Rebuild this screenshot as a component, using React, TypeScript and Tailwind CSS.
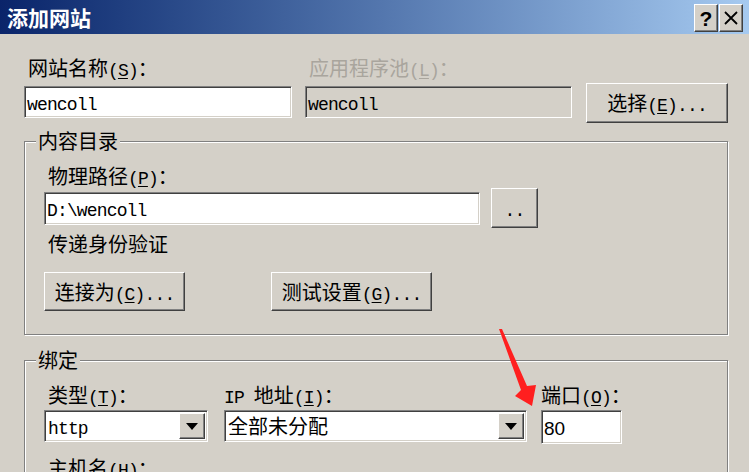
import React from 'react';

// split text into CJK / latin runs; latin runs get the half-width mono face, "&" marks the mnemonic letter
const Mix = ({ t }: { t: string }) => {
    const parts = t.split(/([\x20-\x7e]+)/).filter(Boolean);
    return (
        <>
            {parts.map((p, i) => {
                if (!/[\x20-\x7e]/.test(p[0])) return <span key={i}>{p}</span>;
                const k = p.indexOf('&');
                return (
                    <span key={i} className="font-['Liberation_Mono',monospace] text-[18px] tracking-[-0.85px] whitespace-pre">
                        {k < 0 ? p : <>{p.slice(0, k)}<u className="underline-offset-2">{p[k + 1]}</u>{p.slice(k + 2)}</>}
                    </span>
                );
            })}
        </>
    );
};

const sunken = "border border-t-[#808080] border-l-[#808080] border-b-white border-r-white shadow-[inset_1px_1px_0_#404040,inset_-1px_-1px_0_#d4d0c8]";
const raised = "border border-t-white border-l-white border-b-[#404040] border-r-[#404040] shadow-[inset_-1px_-1px_0_#808080] bg-[#d4d0c8]";

const Label = ({ t, className = '' }: { t: string; className?: string }) => (
    <div className={`h-[24px] whitespace-nowrap overflow-visible ${className}`}><Mix t={t} /></div>
);

const Button = ({ label, className }: { label: string; className: string }) => (
    <div className={`${raised} ${className} flex items-center justify-center`}>
        <span className="h-[24px] whitespace-nowrap"><Mix t={label} /></span>
    </div>
);

const TextBox = ({ value, className, disabled }: { value: React.ReactNode; className: string; disabled?: boolean }) => (
    <div className={`${sunken} ${className} ${disabled ? 'bg-[#d4d0c8]' : 'bg-white'} flex items-center pl-[2px]`}>
        <span className="h-[24px]">{value}</span>
    </div>
);

const Combo = ({ value, className }: { value: string; className: string }) => (
    <div className={`${sunken} ${className} bg-white flex items-stretch p-[2px]`}>
        <div className="flex-1 flex items-center pl-[1px]"><span className="h-[24px]"><Mix t={value} /></span></div>
        <div className={`${raised} w-[26px] flex items-center justify-center`}>
            <svg width="12" height="7" viewBox="0 0 12 7"><path d="M0 0h12L6 7z" fill="#000" /></svg>
        </div>
    </div>
);

const Group = ({ title, children, className }: { title: string; children: React.ReactNode; className: string }) => (
    <fieldset className={`w-[704px] border border-[#808080] shadow-[inset_1px_1px_0_#fff,1px_1px_0_#fff] pl-[11px] ${className}`}>
        <legend className="px-[2px] h-[24px] bg-[#d4d0c8]">{title}</legend>
        <div className="ml-[8px]">{children}</div>
    </fieldset>
);

const App = () => {
    return (
        <div className="relative w-[749px] h-[472px] overflow-hidden bg-[#d4d0c8] text-black text-[20px] leading-[24px] font-['Noto_Sans_CJK_SC',sans-serif]">
            <div className="h-[34px] flex bg-linear-to-r from-[#0a246a] to-[#a6caf0]">
                <h1 className="self-center pl-[7px] text-white font-bold text-[21px]">添加网站</h1>
                <div className="ml-auto mt-[4px] mr-[6px] flex gap-[1px]">
                    <div className={`${raised} w-[24px] h-[28px] flex items-center justify-center`}>
                        <span className="font-['Liberation_Sans',sans-serif] font-bold text-[21px] leading-none">?</span>
                    </div>
                    <div className={`${raised} w-[24px] h-[28px] flex items-center justify-center`}>
                        <svg width="14" height="14" viewBox="0 0 14 14"><path d="M1 1l12 12M13 1L1 13" stroke="#000" strokeWidth="1.8" /></svg>
                    </div>
                </div>
            </div>

            <div className="pl-[24px] pt-[22px]">
                <div className="flex items-start">
                    <div className="w-[268px]">
                        <Label t="网站名称(&S)：" className="pl-[4px]" />
                        <TextBox className="mt-[6px] h-[32px]" value={<Mix t="wencoll" />} />
                    </div>
                    <div className="w-[267px] ml-[13px]">
                        <Label t="应用程序池(&L)：" className="pl-[4px] text-[#a9a59d]" />
                        <TextBox disabled className="mt-[6px] h-[32px]" value={<Mix t="wencoll" />} />
                    </div>
                    <Button label="选择(&E)..." className="ml-[14px] mt-[27px] w-[142px] h-[40px]" />
                </div>

                <Group title="内容目录" className="mt-[6px] pb-[23px]">
                    <Label t="物理路径(&P)：" className="mt-[11px] pl-[4px]" />
                    <div className="flex items-center gap-[11px]">
                        <TextBox className="w-[436px] h-[33px]" value={<Mix t="D:\wencoll" />} />
                        <Button label=".." className="w-[47px] h-[40px]" />
                    </div>
                    <Label t="传递身份验证" className="mt-[4px] pl-[4px]" />
                    <div className="mt-[16px] flex">
                        <Button label="连接为(&C)..." className="w-[141px] h-[39px]" />
                        <Button label="测试设置(&G)..." className="ml-[86px] w-[161px] h-[39px]" />
                    </div>
                </Group>

                <Group title="绑定" className="mt-[13px] pb-[20px]">
                    <div className="mt-[11px] flex">
                        <div className="w-[164px]">
                            <Label t="类型(&T)：" className="pl-[4px]" />
                            <Combo value="http" className="mt-[3px] h-[32px]" />
                        </div>
                        <div className="w-[303px] ml-[16px]">
                            <Label t="IP 地址(&I)：" />
                            <Combo value="全部未分配" className="mt-[3px] h-[32px]" />
                        </div>
                        <div className="w-[81px] ml-[14px]">
                            <Label t="端口(&O)：" />
                            <TextBox className="mt-[3px] h-[34px]" value={<span className="font-['Liberation_Sans',sans-serif] text-[19px]">80</span>} />
                        </div>
                    </div>
                    <Label t="主机名(&H)：" className="mt-[12px] pl-[4px]" />
                </Group>
            </div>

            <svg className="absolute left-0 top-0 pointer-events-none" width="749" height="472">
                <path d="M499 329 L502 329 L527 386 L536 385 L532 406 L515 396 L521 390 Z" fill="#ff1f1f" />
            </svg>
        </div>
    );
};

export default App;
